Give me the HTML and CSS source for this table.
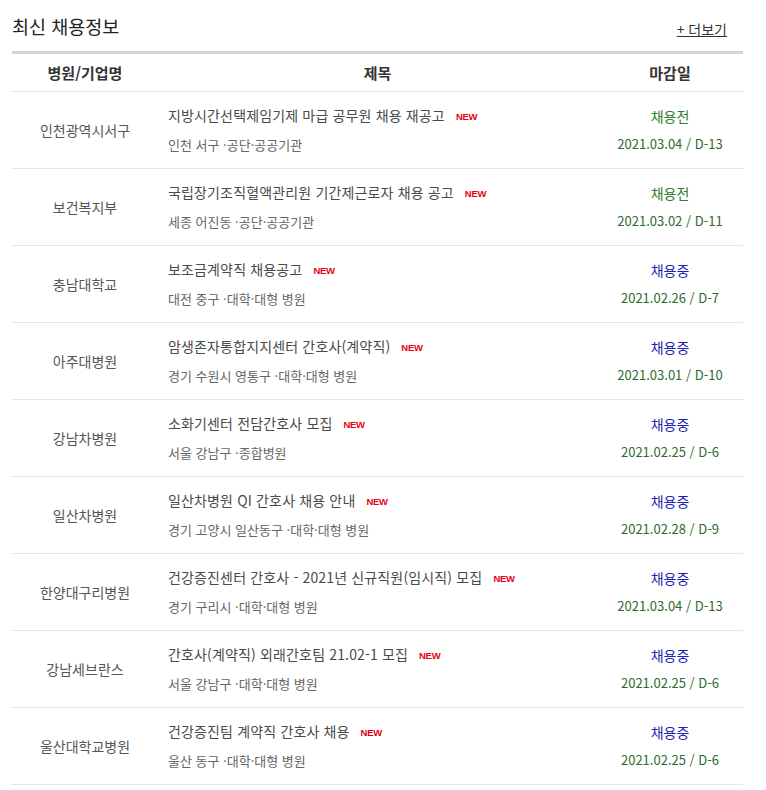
FILE: index.html
```html
<!DOCTYPE html>
<html lang="ko">
<head>
<meta charset="utf-8">
<title>최신 채용정보</title>
<link rel="stylesheet" href="styles.css">
</head>
<body>
<div class="wrap">
  <div class="top">
    <h2 class="ttl">최신 채용정보</h2>
    <a class="more" href="#">+ 더보기</a>
  </div>
  <div class="list">
    <div class="row head">
      <div class="c1">병원/기업명</div>
      <div class="c2h">제목</div>
      <div class="c3">마감일</div>
    </div>

    <div class="row">
      <div class="c1 org">인천광역시서구</div>
      <div class="c2"><div class="t">지방시간선택제임기제 마급 공무원 채용 재공고<span class="new">NEW</span></div><div class="s">인천 서구 ·공단·공공기관</div></div>
      <div class="c3"><div class="st pre">채용전</div><div class="d">2021.03.04 / D-13</div></div>
    </div>
    <div class="row">
      <div class="c1 org">보건복지부</div>
      <div class="c2"><div class="t">국립장기조직혈액관리원 기간제근로자 채용 공고<span class="new">NEW</span></div><div class="s">세종 어진동 ·공단·공공기관</div></div>
      <div class="c3"><div class="st pre">채용전</div><div class="d">2021.03.02 / D-11</div></div>
    </div>
    <div class="row">
      <div class="c1 org">충남대학교</div>
      <div class="c2"><div class="t">보조금계약직 채용공고<span class="new">NEW</span></div><div class="s">대전 중구 ·대학·대형 병원</div></div>
      <div class="c3"><div class="st ing">채용중</div><div class="d">2021.02.26 / D-7</div></div>
    </div>
    <div class="row">
      <div class="c1 org">아주대병원</div>
      <div class="c2"><div class="t">암생존자통합지지센터 간호사(계약직)<span class="new">NEW</span></div><div class="s">경기 수원시 영통구 ·대학·대형 병원</div></div>
      <div class="c3"><div class="st ing">채용중</div><div class="d">2021.03.01 / D-10</div></div>
    </div>
    <div class="row">
      <div class="c1 org">강남차병원</div>
      <div class="c2"><div class="t">소화기센터 전담간호사 모집<span class="new">NEW</span></div><div class="s">서울 강남구 ·종합병원</div></div>
      <div class="c3"><div class="st ing">채용중</div><div class="d">2021.02.25 / D-6</div></div>
    </div>
    <div class="row">
      <div class="c1 org">일산차병원</div>
      <div class="c2"><div class="t">일산차병원 QI 간호사 채용 안내<span class="new">NEW</span></div><div class="s">경기 고양시 일산동구 ·대학·대형 병원</div></div>
      <div class="c3"><div class="st ing">채용중</div><div class="d">2021.02.28 / D-9</div></div>
    </div>
    <div class="row">
      <div class="c1 org">한양대구리병원</div>
      <div class="c2"><div class="t">건강증진센터 간호사 - 2021년 신규직원(임시직) 모집<span class="new">NEW</span></div><div class="s">경기 구리시 ·대학·대형 병원</div></div>
      <div class="c3"><div class="st ing">채용중</div><div class="d">2021.03.04 / D-13</div></div>
    </div>
    <div class="row">
      <div class="c1 org">강남세브란스</div>
      <div class="c2"><div class="t">간호사(계약직) 외래간호팀 21.02-1 모집<span class="new">NEW</span></div><div class="s">서울 강남구 ·대학·대형 병원</div></div>
      <div class="c3"><div class="st ing">채용중</div><div class="d">2021.02.25 / D-6</div></div>
    </div>
    <div class="row">
      <div class="c1 org">울산대학교병원</div>
      <div class="c2"><div class="t">건강증진팀 계약직 간호사 채용<span class="new">NEW</span></div><div class="s">울산 동구 ·대학·대형 병원</div></div>
      <div class="c3"><div class="st ing">채용중</div><div class="d">2021.02.25 / D-6</div></div>
    </div>
  </div>
</div>
</body>
</html>
```
FILE: styles.css
```css
* { box-sizing: border-box; }
html, body { margin: 0; padding: 0; background: #fff; }
body {
  font-family: "Noto Sans CJK KR", "Noto Sans", sans-serif;
  color: #555;
}
.wrap {
  width: 731px;
  margin-left: 12px;
}
.top {
  height: 51px;
  display: flex;
  justify-content: space-between;
  align-items: center;
}
.ttl {
  margin: 0;
  font-size: 18.5px;
  font-weight: 400;
  color: #222;
  line-height: 22px;
}
.more {
  font-size: 14px;
  color: #333;
  text-decoration: underline;
  margin-right: 16px;
  padding-top: 6px;
  line-height: 16px;
}
.list {
  border-top: 3px solid #d4d4d4;
}
.row {
  display: grid;
  grid-template-columns: 146px 1fr 146px;
  border-bottom: 1px solid #e6e6e6;
  height: 77px;
}
.row.head {
  height: 38px;
  font-size: 15px;
  font-weight: 700;
  color: #333;
}
.row.head > div {
  display: flex;
  align-items: center;
  justify-content: center;
}
.c1 {
  display: flex;
  align-items: center;
  justify-content: center;
}
.org {
  font-size: 14px;
  color: #555;
}
.c2 {
  padding-left: 10px;
  display: flex;
  flex-direction: column;
  justify-content: center;
}
.t {
  font-size: 14px;
  line-height: 28px;
  color: #4a4a4a;
  letter-spacing: 0.15px;
  white-space: nowrap;
}
.s {
  font-size: 13px;
  line-height: 28px;
  color: #666;
  white-space: nowrap;
}
.new {
  font-family: "Liberation Sans", Arial, sans-serif;
  font-size: 9.5px;
  font-weight: 700;
  color: #e60012;
  margin-left: 11px;
  letter-spacing: -0.3px;
  vertical-align: 1px;
}
.c3 {
  display: flex;
  flex-direction: column;
  justify-content: center;
  align-items: center;
}
.st {
  font-size: 14px;
  line-height: 28px;
}
.st.pre { color: #2e7d2e; }
.st.ing { color: #1f1fb5; }
.d {
  font-size: 13px;
  line-height: 28px;
  color: #2e6b2e;
}
```
